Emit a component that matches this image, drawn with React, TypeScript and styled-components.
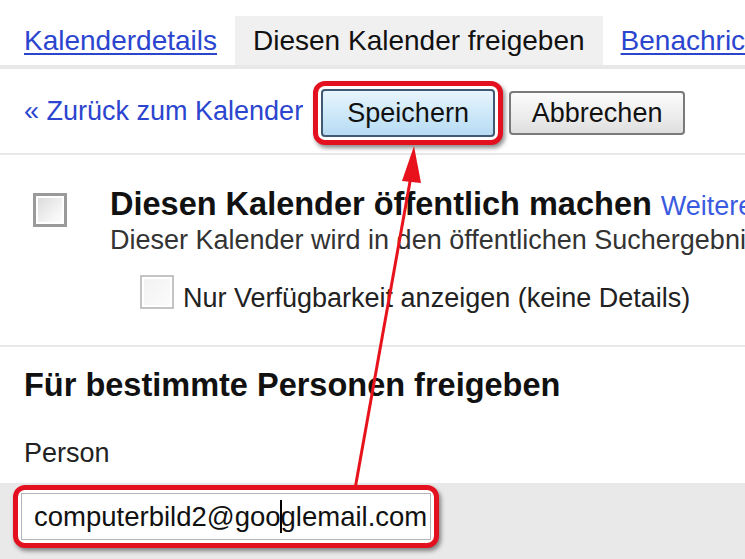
import styled, { createGlobalStyle } from "styled-components";

const GlobalStyle = createGlobalStyle`
  html, body {
    margin: 0;
    padding: 0;
    background: #ffffff;
  }
  body {
    font-family: "Liberation Sans", Arial, sans-serif;
    color: #1a1a1a;
  }
`;

const Page = styled.div`
  position: relative;
  width: 745px;
  height: 559px;
  overflow: hidden;
  background: #ffffff;
`;

const TabBar = styled.div`
  display: flex;
  margin-top: 16px;
  padding-left: 6px;
  height: 49px;
  border-bottom: 4px solid #e8e8e8;
  white-space: nowrap;
`;

const Tab = styled.a<{ active?: boolean }>`
  display: flex;
  align-items: center;
  padding: 0 18px;
  font-size: 28px;
  color: ${({ active }) => (active ? "#111" : "#2b45cf")};
  background: ${({ active }) => (active ? "#f0f0f0" : "transparent")};
  text-decoration: ${({ active }) => (active ? "none" : "underline")};
  text-underline-offset: 3px;
`;

const Toolbar = styled.div`
  box-sizing: border-box;
  display: flex;
  align-items: center;
  height: 86px;
  padding: 4px 0 0 24px;
  border-bottom: 2px solid #e8e8e8;
  white-space: nowrap;
`;

const BackLink = styled.a`
  font-size: 27px;
  color: #2b45cf;
  margin: -3px 10px 0 0;
`;

const Highlight = styled.div`
  display: inline-flex;
  padding: 3px;
  border: 5px solid #e3101f;
  border-radius: 12px;
  box-shadow: 2px 3px 4px rgba(0, 0, 0, 0.45);
  background: #ffffff;
`;

const Button = styled.button<{ primary?: boolean }>`
  font-family: "Liberation Sans", Arial, sans-serif;
  font-size: 27px;
  color: #111;
  width: ${({ primary }) => (primary ? "174px" : "176px")};
  height: ${({ primary }) => (primary ? "48px" : "44px")};
  border: 2px solid ${({ primary }) => (primary ? "#3f5a72" : "#7a7a7a")};
  border-radius: 4px;
  background: ${({ primary }) =>
    primary
      ? "linear-gradient(#e8f5fd, #c9e6f8 60%, #b7dbf3)"
      : "linear-gradient(#fbfbfb, #ececec 60%, #dedede)"};
  padding: 0;
  margin-left: ${({ primary }) => (primary ? "0" : "6px")};
`;

const PublicSection = styled.div`
  padding: 31px 0 31px 33px;
  border-bottom: 2px solid #e8e8e8;
  white-space: nowrap;
`;

const OptionRow = styled.div`
  display: flex;
  align-items: flex-start;
`;

const Checkbox = styled.span<{ small?: boolean }>`
  flex: none;
  box-sizing: border-box;
  width: 34px;
  height: 34px;
  margin-top: ${({ small }) => (small ? "0" : "7px")};
  border: ${({ small }) => (small ? "2px solid #c4c4c4" : "3px solid #9a9a9a")};
  background: ${({ small }) =>
    small
      ? "linear-gradient(135deg, #f2f2f2, #fbfbfb)"
      : "linear-gradient(135deg, #d9d9d9, #f6f6f6 70%, #ffffff)"};
  box-shadow: inset 0 0 0 2px #ffffff;
`;

const OptionText = styled.div`
  margin-left: 43px;
`;

const OptionTitle = styled.div`
  font-size: 32.5px;
  line-height: 36px;
  font-weight: bold;
  color: #111;
`;

const MoreLink = styled.a`
  font-size: 27px;
  font-weight: normal;
  color: #3a5be0;
`;

const OptionHint = styled.div`
  font-size: 27px;
  line-height: 32px;
  color: #333;
`;

const SubOption = styled.div`
  display: flex;
  align-items: flex-start;
  margin: 19px 0 0 107px;
`;

const SubLabel = styled.span`
  font-size: 27px;
  line-height: 32px;
  margin: 7px 0 0 9px;
  color: #222;
`;

const ShareSection = styled.div`
  padding: 20px 0 0 24px;
  white-space: nowrap;
`;

const SectionTitle = styled.div`
  font-size: 32.5px;
  line-height: 36px;
  font-weight: bold;
  color: #111;
`;

const FieldLabel = styled.div`
  font-size: 27px;
  line-height: 32px;
  margin-top: 34px;
  color: #222;
`;

const InputBand = styled.div`
  margin-top: 14px;
  height: 76px;
  background: #e9e9e9;
  padding: 2px 0 0 13px;
  box-sizing: border-box;
`;

const FieldBox = styled.div`
  box-sizing: border-box;
  width: 410px;
  height: 47px;
  background: #ffffff;
  border: 1px solid #b5b5b5;
  display: flex;
  align-items: center;
  padding-left: 12px;
  font-size: 27.5px;
  color: #111;
  white-space: nowrap;
  overflow: hidden;
`;

const Caret = styled.span`
  display: inline-block;
  width: 2px;
  height: 33px;
  margin: 0 -1px;
  background: #000;
  vertical-align: middle;
`;

const ArrowLayer = styled.svg`
  position: absolute;
  left: 0;
  top: 0;
  pointer-events: none;
`;

export default function App() {
  return (
    <>
      <GlobalStyle />
      <Page>
        <TabBar>
          <Tab>Kalenderdetails</Tab>
          <Tab active>Diesen Kalender freigeben</Tab>
          <Tab>Benachrichtigungen</Tab>
        </TabBar>

        <Toolbar>
          <BackLink>« Zurück zum Kalender</BackLink>
          <Highlight>
            <Button primary>Speichern</Button>
          </Highlight>
          <Button>Abbrechen</Button>
        </Toolbar>

        <PublicSection>
          <OptionRow>
            <Checkbox />
            <OptionText>
              <OptionTitle>
                Diesen Kalender öffentlich machen <MoreLink>Weitere Informationen</MoreLink>
              </OptionTitle>
              <OptionHint>
                Dieser Kalender wird in den öffentlichen Suchergebnissen von Google angezeigt.
              </OptionHint>
            </OptionText>
          </OptionRow>
          <SubOption>
            <Checkbox small />
            <SubLabel>Nur Verfügbarkeit anzeigen (keine Details)</SubLabel>
          </SubOption>
        </PublicSection>

        <ShareSection>
          <SectionTitle>Für bestimmte Personen freigeben</SectionTitle>
          <FieldLabel>Person</FieldLabel>
        </ShareSection>

        <InputBand>
          <Highlight>
            <FieldBox>
              computerbild2@goo
              <Caret />
              glemail.com
            </FieldBox>
          </Highlight>
        </InputBand>

        <ArrowLayer width="745" height="559" viewBox="0 0 745 559">
          <line x1="355" y1="489" x2="411" y2="176" stroke="#e8121c" strokeWidth="3" />
          <polygon points="414,146 402,181 421,183" fill="#e8121c" />
        </ArrowLayer>
      </Page>
    </>
  );
}
